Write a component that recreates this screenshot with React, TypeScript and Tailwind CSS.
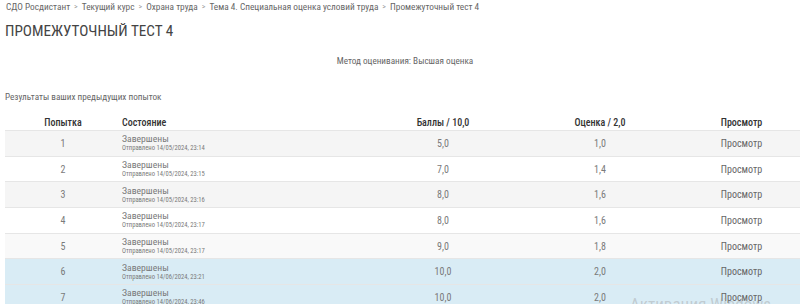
import React from 'react';

const rows = [
  { n: 1, date: '14/05/2024, 23:14', score: '5,0', grade: '1,0', bg: 'bg-[#f5f5f5]' },
  { n: 2, date: '14/05/2024, 23:15', score: '7,0', grade: '1,4', bg: 'bg-white' },
  { n: 3, date: '14/05/2024, 23:16', score: '8,0', grade: '1,6', bg: 'bg-[#f5f5f5]' },
  { n: 4, date: '14/05/2024, 23:17', score: '8,0', grade: '1,6', bg: 'bg-white' },
  { n: 5, date: '14/05/2024, 23:17', score: '9,0', grade: '1,8', bg: 'bg-[#f9f9f9]' },
  { n: 6, date: '14/06/2024, 23:21', score: '10,0', grade: '2,0', bg: 'bg-[#d9ecf5]' },
  { n: 7, date: '14/06/2024, 23:46', score: '10,0', grade: '2,0', bg: 'bg-[#d9ecf5]' },
];

const crumbs = ['СДО Росдистант', 'Текущий курс', 'Охрана труда', 'Тема 4. Специальная оценка условий труда', 'Промежуточный тест 4'];

const cols = 'grid grid-cols-[116px_248px_148px_166px_117px]';

export default function App() {
  return (
    <div className="relative h-[304px] w-[800px] overflow-hidden bg-white font-['Roboto',sans-serif] [font-stretch:80%] text-[#7a7a7a]">
      {/* Breadcrumb */}
      <div className="flex items-center gap-[4px] px-[6px] text-[9.3px] leading-[13px] text-[#666]">
        {crumbs.map((c, i) => (
          <React.Fragment key={c}>
            {i > 0 && <span className="text-[8px] text-[#999]">&gt;</span>}
            <span>{c}</span>
          </React.Fragment>
        ))}
      </div>

      <h2 className="mt-[8px] px-[5px] text-[15.2px] leading-[20px] text-[#444]">
        ПРОМЕЖУТОЧНЫЙ ТЕСТ 4
      </h2>

      <p className="mt-[13px] pl-[10px] text-center text-[9.2px] leading-[13px] text-[#666]">
        Метод оценивания: Высшая оценка
      </p>

      <p className="mt-[23px] px-[5px] text-[9.2px] leading-[13px] text-[#666]">
        Результаты ваших предыдущих попыток
      </p>

      {/* Table */}
      <div className="ml-[5px] mt-[12px] w-[800px]">
        <div className={`${cols} h-[15px] items-center text-[10px] font-medium text-[#333]`}>
          <div className="text-center">Попытка</div>
          <div className="pl-[1px]">Состояние</div>
          <div className="text-center">Баллы / 10,0</div>
          <div className="text-center">Оценка / 2,0</div>
          <div className="text-center">Просмотр</div>
        </div>
        {rows.map((r) => (
          <div
            key={r.n}
            className={`${cols} h-[25.7px] items-center border-t border-[#e6e6e6] text-[10px] ${r.bg}`}
          >
            <div className="text-center">{r.n}</div>
            <div className="pl-[1px] leading-[11px]">
              <div className="text-[9.7px]">Завершены</div>
              <div className="text-[6.6px] leading-[9px]">Отправлено {r.date}</div>
            </div>
            <div className="text-center">{r.score}</div>
            <div className="text-center">{r.grade}</div>
            <div className="text-center text-[#666]">Просмотр</div>
          </div>
        ))}
      </div>

      {/* Windows activation watermark */}
      <div className="absolute left-[630px] top-[294px] text-[17px] leading-[20px] text-[#999]/40">
        Активация Windows
      </div>
    </div>
  );
}
